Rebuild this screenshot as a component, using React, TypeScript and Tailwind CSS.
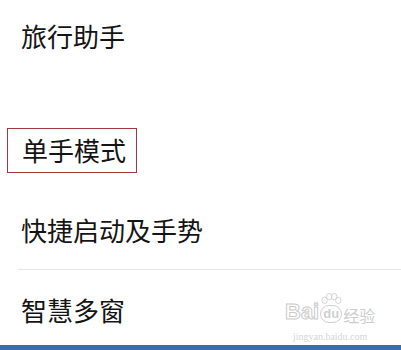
export default function App() {
  const font = { fontFamily: '"Noto Sans CJK SC", "Noto Sans", sans-serif' };

  return (
    <main
      className="relative w-[401px] h-[350px] bg-white text-[#141414] overflow-hidden flex flex-col"
      style={font}
    >
      <div className="h-[76px] pl-[21px] pb-[4px] flex items-center text-[26px] leading-none">
        旅行助手
      </div>

      <div className="h-[35px]" />

      <div className="h-[78px] pl-[7px] flex items-center">
        <span className="h-[45px] pl-[14px] pr-[10px] flex items-center border border-[#a3383c] text-[26px] leading-none">
          单手模式
        </span>
      </div>

      <div className="h-[80px] pl-[21px] pt-[1px] flex items-center text-[26px] leading-none">
        快捷启动及手势
      </div>

      <div className="ml-[18px] h-px bg-[#e6e6e6]" />

      <div className="h-[75px] pl-[21px] pt-[5px] flex items-center text-[26px] leading-none">
        智慧多窗
      </div>

      <div className="h-[5px] bg-[#3d6caa]" />

      {/* watermark */}
      <div className="absolute left-[285px] top-[293px] flex flex-col items-center text-[#d0d0d0] pointer-events-none">
        <div className="flex items-end gap-[1px]">
          <span
            className="text-[22px] leading-none font-bold text-transparent"
            style={{ WebkitTextStroke: "1px #cacaca", fontFamily: '"Liberation Sans", sans-serif' }}
          >
            Bai
          </span>
          <span className="flex flex-col items-center">
            <svg width="22" height="11" viewBox="0 0 24 12" className="mb-[1px]">
              <ellipse cx="5" cy="8" rx="3" ry="3.5" fill="none" stroke="#d0d0d0" />
              <ellipse cx="10" cy="4" rx="3" ry="3.5" fill="none" stroke="#d0d0d0" />
              <ellipse cx="15.5" cy="4" rx="3" ry="3.5" fill="none" stroke="#d0d0d0" />
              <ellipse cx="20" cy="8" rx="3" ry="3.5" fill="none" stroke="#d0d0d0" />
            </svg>
            <span
              className="px-[2px] rounded-full border border-[#d0d0d0] text-[13px] leading-[16px] font-bold"
              style={{ fontFamily: '"Liberation Sans", sans-serif' }}
            >
              du
            </span>
          </span>
          <span className="text-[16px] leading-none text-[#cecece]">经验</span>
        </div>
        <span
          className="mt-[9px] text-[10px] leading-none text-[#d6d6d6]"
          style={{ fontFamily: '"Liberation Serif", serif' }}
        >
          jingyan.baidu.com
        </span>
      </div>
    </main>
  );
}
